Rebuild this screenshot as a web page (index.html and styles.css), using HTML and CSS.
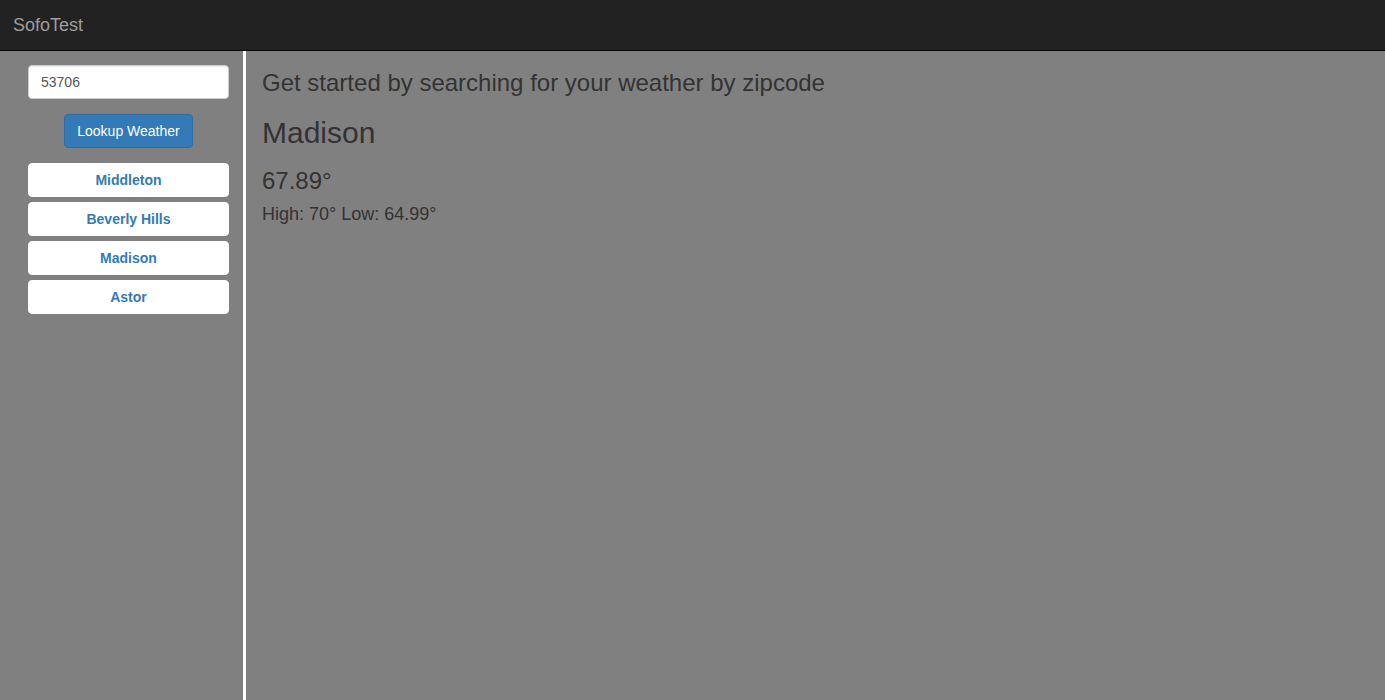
FILE: index.html
```html
<!DOCTYPE html>
<html>
<head>
<meta charset="utf-8">
<title>SofoTest</title>
<link rel="stylesheet" href="styles.css">
</head>
<body>
<nav class="navbar">
  <a class="brand" href="#">SofoTest</a>
</nav>
<div class="layout">
  <aside class="sidebar">
    <input class="zip-input" type="text" value="53706">
    <button class="lookup-btn" type="button">Lookup Weather</button>
    <ul class="city-list">
      <li><button class="city-btn" type="button">Middleton</button></li>
      <li><button class="city-btn" type="button">Beverly Hills</button></li>
      <li><button class="city-btn" type="button">Madison</button></li>
      <li><button class="city-btn" type="button">Astor</button></li>
    </ul>
  </aside>
  <main class="content">
    <h3 class="intro">Get started by searching for your weather by zipcode</h3>
    <h2 class="city-name">Madison</h2>
    <h3 class="temp">67.89°</h3>
    <h4 class="range">High: 70° Low: 64.99°</h4>
  </main>
</div>
</body>
</html>
```

FILE: styles.css
```css
* { box-sizing: border-box; }
html, body { height: 100%; }
body {
  margin: 0;
  font-family: "Liberation Sans", Arial, Helvetica, sans-serif;
  font-size: 14px;
  line-height: 1.42857;
  color: #333;
  background: #808080;
  display: flex;
  flex-direction: column;
  overflow: hidden;
}
.navbar {
  height: 51px;
  flex: none;
  background: #222;
  border-bottom: 1px solid #080808;
  display: flex;
  align-items: flex-start;
}
.brand {
  padding: 15px 13px;
  font-size: 18px;
  line-height: 20px;
  color: #9d9d9d;
  text-decoration: none;
}
.layout {
  flex: 1;
  display: flex;
  min-height: 0;
}
.sidebar {
  width: 246px;
  flex: none;
  border-right: 3px solid #fff;
  padding: 14px 14px 0 28px;
  display: flex;
  flex-direction: column;
  align-items: center;
}
.zip-input {
  width: 201px;
  height: 34px;
  padding: 6px 12px;
  font-family: inherit;
  font-size: 14px;
  color: #555;
  background: #fff;
  border: 1px solid #ccc;
  border-radius: 4px;
  box-shadow: inset 0 1px 1px rgba(0,0,0,.075);
  margin: 0;
}
.lookup-btn {
  margin-top: 15px;
  height: 34px;
  padding: 6px 12px;
  font-family: inherit;
  font-size: 14px;
  line-height: 20px;
  color: #fff;
  background: #337ab7;
  border: 1px solid #2e6da4;
  border-radius: 4px;
}
.city-list {
  list-style: none;
  margin: 15px 0 0;
  padding: 0;
  width: 201px;
  display: flex;
  flex-direction: column;
  gap: 5px;
}
.city-btn {
  display: block;
  width: 100%;
  height: 34px;
  padding: 6px 12px;
  font-family: inherit;
  font-size: 14px;
  font-weight: bold;
  line-height: 20px;
  color: #337ab7;
  background: #fff;
  border: 1px solid #fff;
  border-radius: 4px;
}
.content {
  flex: 1;
  padding: 19px 16px 0;
}
.content h2, .content h3, .content h4 {
  font-weight: 500;
  line-height: 1.1;
  color: #333;
}
.intro {
  font-size: 24px;
  margin: 0 0 10px;
}
.city-name {
  font-size: 30px;
  margin: 20px 0 10px;
}
.temp {
  font-size: 24px;
  margin: 19px 0 10px;
}
.range {
  font-size: 18px;
  margin: 7px 0 10px;
}
```
